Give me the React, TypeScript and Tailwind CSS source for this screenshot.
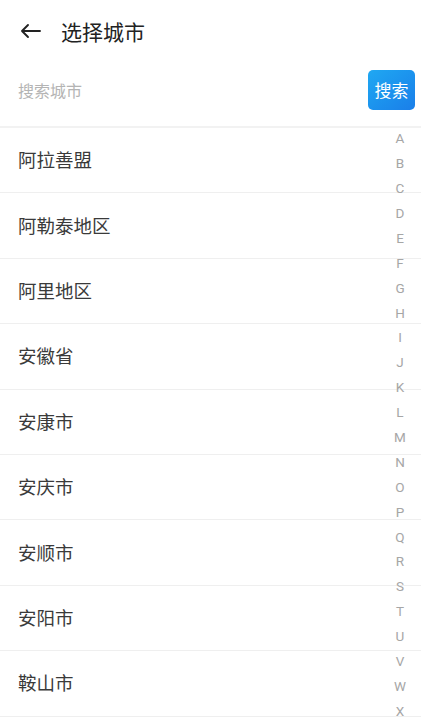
import React from 'react';

const cities = ['阿拉善盟', '阿勒泰地区', '阿里地区', '安徽省', '安康市', '安庆市', '安顺市', '安阳市', '鞍山市', '澳门'];
const letters = 'ABCDEFGHIJKLMNOPQRSTUVWXYZ'.split('');

export default function App() {
  return (
    <div className="relative h-[720px] w-full overflow-hidden bg-white font-['Noto_Sans_CJK_SC','Noto_Sans',sans-serif]">
      {/* header */}
      <div className="flex h-[62px] items-center pl-[20px]">
        <svg className="h-[22px] w-[22px] text-[#222]" viewBox="0 0 22 22" fill="none" stroke="currentColor" strokeWidth={1.9} strokeLinecap="round" strokeLinejoin="round">
          <path d="M20 11H2M8 5L2 11l6 6" />
        </svg>
        <h1 className="ml-[19px] text-[21px] leading-none text-[#222]">选择城市</h1>
      </div>

      {/* search */}
      <div className="flex items-center justify-between pl-[18px] pr-[6px] pt-[8px] pb-[16px]">
        <input
          className="min-w-0 flex-1 bg-transparent text-[16px] text-[#333] outline-none placeholder:text-[#b4b4b4]"
          placeholder="搜索城市"
        />
        <button className="h-[40px] w-[47px] rounded-[5px] bg-gradient-to-br from-[#20a8f2] to-[#1b7ee9] text-[17px] text-white">
          搜索
        </button>
      </div>

      {/* list */}
      <div className="border-t-[2px] border-[#f2f2f2]">
        {cities.map((c) => (
          <div key={c} className="flex h-[65.4px] items-center border-b-[1.5px] border-[#efefef] pl-[18px] text-[18.5px] text-[#3a3a3a]">
            {c}
          </div>
        ))}
      </div>

      {/* index bar */}
      <div className="absolute right-[8px] top-[126px] flex w-[26px] flex-col items-center">
        {letters.map((l) => (
          <div key={l} className="flex h-[24.9px] items-center text-[13.5px] font-['Roboto',sans-serif] text-[#a6a6a6]">
            {l}
          </div>
        ))}
      </div>
    </div>
  );
}
